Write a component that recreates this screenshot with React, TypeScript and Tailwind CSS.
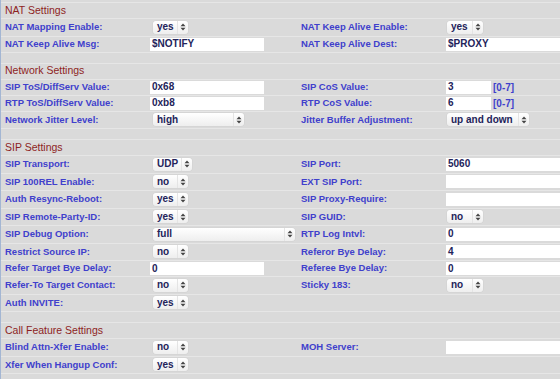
import React from "react";

type Field =
  | { kind: "select"; value: string; w: number }
  | { kind: "input"; value: string; w?: number; suffix?: string }
  | { kind: "none" };

type Row =
  | { type: "heading"; text: string }
  | { type: "blank"; h?: number }
  | { type: "data"; l1: string; f1: Field; l2: string; f2: Field };

const sel = (value: string, w: number): Field => ({ kind: "select", value, w });
const inp = (value: string, w?: number, suffix?: string): Field => ({ kind: "input", value, w, suffix });
const none: Field = { kind: "none" };

const rows: Row[] = [
  { type: "heading", text: "NAT Settings" },
  { type: "data", l1: "NAT Mapping Enable:", f1: sel("yes", 35), l2: "NAT Keep Alive Enable:", f2: sel("yes", 36) },
  { type: "data", l1: "NAT Keep Alive Msg:", f1: inp("$NOTIFY"), l2: "NAT Keep Alive Dest:", f2: inp("$PROXY") },
  { type: "blank" },
  { type: "heading", text: "Network Settings" },
  { type: "data", l1: "SIP ToS/DiffServ Value:", f1: inp("0x68"), l2: "SIP CoS Value:", f2: inp("3", 45, "[0-7]") },
  { type: "data", l1: "RTP ToS/DiffServ Value:", f1: inp("0xb8"), l2: "RTP CoS Value:", f2: inp("6", 45, "[0-7]") },
  { type: "data", l1: "Network Jitter Level:", f1: sel("high", 91), l2: "Jitter Buffer Adjustment:", f2: sel("up and down", 82) },
  { type: "blank" },
  { type: "heading", text: "SIP Settings" },
  { type: "data", l1: "SIP Transport:", f1: sel("UDP", 39), l2: "SIP Port:", f2: inp("5060") },
  { type: "data", l1: "SIP 100REL Enable:", f1: sel("no", 35), l2: "EXT SIP Port:", f2: inp("") },
  { type: "data", l1: "Auth Resync-Reboot:", f1: sel("yes", 35), l2: "SIP Proxy-Require:", f2: inp("") },
  { type: "data", l1: "SIP Remote-Party-ID:", f1: sel("yes", 35), l2: "SIP GUID:", f2: sel("no", 36) },
  { type: "data", l1: "SIP Debug Option:", f1: sel("full", 142), l2: "RTP Log Intvl:", f2: inp("0") },
  { type: "data", l1: "Restrict Source IP:", f1: sel("no", 35), l2: "Referor Bye Delay:", f2: inp("4") },
  { type: "data", l1: "Refer Target Bye Delay:", f1: inp("0"), l2: "Referee Bye Delay:", f2: inp("0") },
  { type: "data", l1: "Refer-To Target Contact:", f1: sel("no", 35), l2: "Sticky 183:", f2: sel("no", 36) },
  { type: "data", l1: "Auth INVITE:", f1: sel("yes", 35), l2: "", f2: none },
  { type: "blank" },
  { type: "heading", text: "Call Feature Settings" },
  { type: "data", l1: "Blind Attn-Xfer Enable:", f1: sel("no", 35), l2: "MOH Server:", f2: inp("") },
  { type: "data", l1: "Xfer When Hangup Conf:", f1: sel("yes", 35), l2: "", f2: none },
  { type: "blank", h: 24 },
];

const font = { fontFamily: '"Liberation Sans", Arial, sans-serif' };

function Arrows() {
  return (
    <svg width="6" height="8" viewBox="0 0 6 8" className="block">
      <path d="M3 0.6 L5.5 3.3 L0.5 3.3 Z" fill="#444" />
      <path d="M3 7.4 L5.5 4.7 L0.5 4.7 Z" fill="#444" />
    </svg>
  );
}

function Select({ value, w }: { value: string; w: number }) {
  return (
    <div
      className="flex h-[13px] items-center rounded-[3px] bg-gradient-to-b from-white to-[#eeeeee] shadow-[0_0_0_0.5px_#cfcfcf]"
      style={{ width: w }}
    >
      <span className="flex-1 pl-[4px] text-[10px] font-bold leading-none text-[#23235a]">{value}</span>
      <div className="h-full w-px bg-[#e4e4e4]" />
      <div className="flex w-[10px] justify-center">
        <Arrows />
      </div>
    </div>
  );
}

function Input({ value, w }: { value: string; w?: number }) {
  return (
    <div
      className="flex h-[13px] items-center bg-white pl-[2px] text-[10px] font-bold leading-none text-[#23235a]"
      style={{ width: w ?? 114 }}
    >
      {value}
    </div>
  );
}

function FieldView({ f, right }: { f: Field; right?: boolean }) {
  if (f.kind === "select")
    return (
      <div className={right ? "pl-[1px]" : "pl-[3px]"}>
        <Select value={f.value} w={f.w} />
      </div>
    );
  if (f.kind === "input")
    return (
      <div className="flex items-center gap-[2px]">
        <Input value={f.value} w={f.w} />
        {f.suffix && <span className="text-[10px] font-bold text-[#4040cc]">{f.suffix}</span>}
      </div>
    );
  return null;
}

export default function App() {
  return (
    <div className="h-[379px] w-[560px] overflow-hidden border-l border-[#a3b6d3] bg-[#dadada]" style={font}>
      <div className="h-[3px] border-b border-[#e6e6e6]" />
      {rows.map((r, i) => {
        if (r.type === "heading")
          return (
            <div key={i} className="flex h-[16px] items-center border-b border-[#e6e6e6] pl-[4px] text-[10.5px] text-[#8e1f1f]">
              {r.text}
            </div>
          );
        if (r.type === "blank")
          return <div key={i} className="border-b border-[#e6e6e6]" style={{ height: r.h ?? 11 }} />;
        const hasSel = r.f1.kind === "select" || r.f2.kind === "select";
        return (
          <div
            key={i}
            className={`flex items-center border-b border-[#e6e6e6] ${hasSel ? "h-[17.5px]" : "h-[16px]"}`}
          >
            <div className="w-[149px] shrink-0 pl-[4px] text-[9.5px] font-bold text-[#4040cc]">{r.l1}</div>
            <div className="w-[151px] shrink-0">
              <FieldView f={r.f1} />
            </div>
            <div className="w-[145px] shrink-0 text-[9.5px] font-bold text-[#4040cc]">{r.l2}</div>
            <div className="flex-1">
              <FieldView f={r.f2} right />
            </div>
          </div>
        );
      })}
    </div>
  );
}
